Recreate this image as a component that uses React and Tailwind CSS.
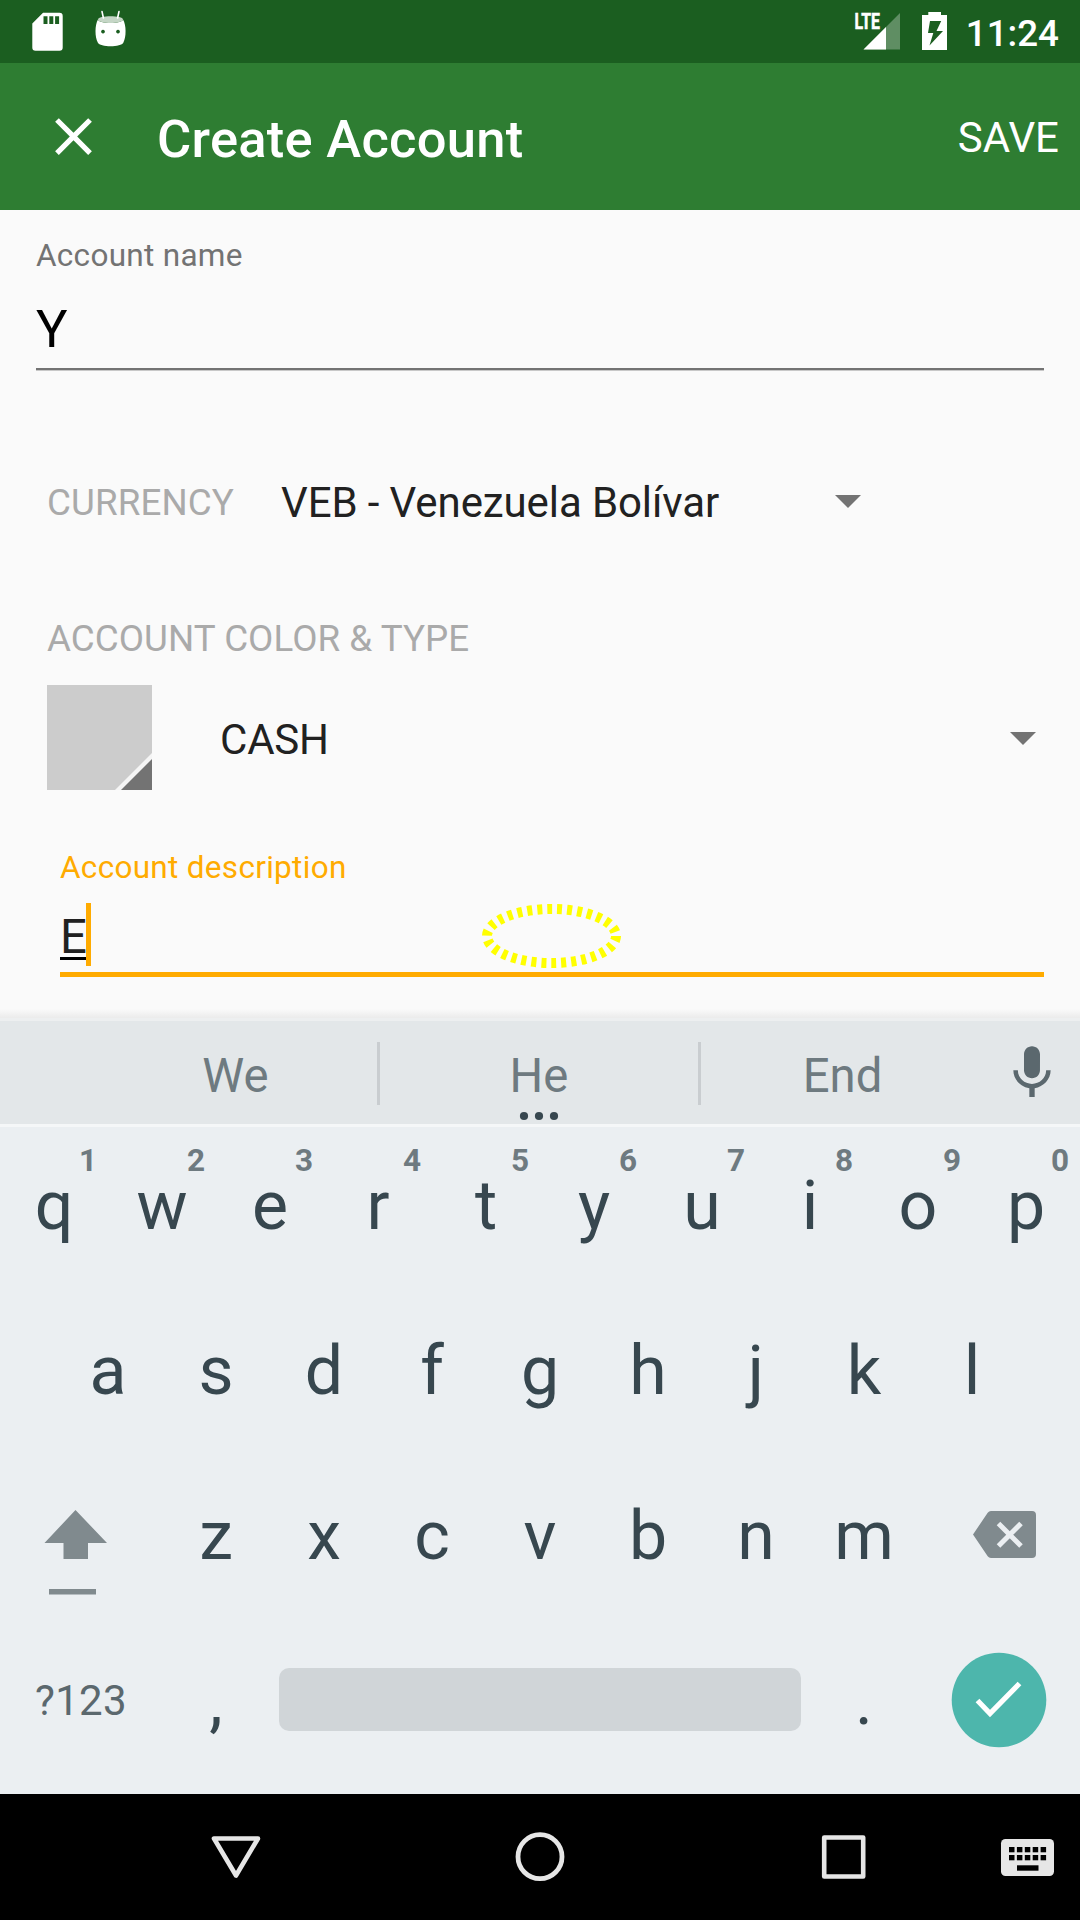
const ROW_ONE = ['q', 'w', 'e', 'r', 't', 'y', 'u', 'i', 'o', 'p'];
const ROW_TWO = ['a', 's', 'd', 'f', 'g', 'h', 'j', 'k', 'l'];
const ROW_THREE = ['z', 'x', 'c', 'v', 'b', 'n', 'm'];

function StatusBar() {
  return (
    <header className="flex h-[63px] shrink-0 bg-[#1b5e20] text-white">
      <svg className="h-[63px] w-[160px]" viewBox="0 0 160 63" fill="white">
        <path
          fillRule="evenodd"
          d="M43 12.7h16.5a3.2 3.2 0 0 1 3.2 3.2v31.600a3.200 3.200 0 0 1-3.200 3.200h-24a3.200 3.200 0 0 1-3.200-3.200V23.500zM43.500 16.300v7.800h4v-7.800zM49.300 16.300v7.800h4v-7.800zM55.100 16.300v7.800h4v-7.800z"
        />
        <path
          fillRule="evenodd"
          d="M98 19.500c0 4.600 25 4.600 25 0c3.400 5.500 3.400 17.700.3 23.200c-1.800 4.600-23.600 4.600-25.400 0c-3.200-5.500-3.200-17.700.1-23.200zM103 29.700a1.900 1.900 0 1 0 .01 0zM118 29.700a1.900 1.900 0 1 0 .01 0z"
        />
        <path d="M98 19.500c0-4.400 25-4.400 25 0c0 4.600-25 4.600-25 0z" fill="#c5d6c6" />
        <path d="M102 11.500l1.400 6.500M119 11.500l-1.400 6.500" stroke="white" strokeWidth="1.600" strokeLinecap="round" />
      </svg>
      <svg className="ml-auto h-[63px] w-[112px]" viewBox="848 0 112 63" fill="white">
        <text
          x="854.500"
          y="29.300"
          fontFamily="Roboto, sans-serif"
          fontWeight="700"
          fontSize="22.500"
          textLength="25.500"
          lengthAdjust="spacingAndGlyphs"
          stroke="white"
          strokeWidth="0.600"
        >
          LTE
        </text>
        <path d="M863.500 49.500L900 13v36.500z" opacity=".3" />
        <path d="M863.500 49.500L886 27v22.500z" />
        <path
          fillRule="evenodd"
          d="M928.300 12h12.700v3h6v35h-25V15h6.300zM930 21l-2 12h5.300l-3.800 12.500L943 31h-6.500l4.700-10z"
        />
      </svg>
      <span className="mr-[21px] w-[99px] pt-[2px] text-right text-[36.75px] leading-[64px] font-medium whitespace-nowrap">11:24</span>
    </header>
  );
}

function Toolbar() {
  return (
    <div className="flex h-[147px] shrink-0 items-center bg-[#2e7d32] pr-[21px] pl-[42px] text-white">
      <svg className="size-[63px]" viewBox="0 0 24 24" fill="currentColor">
        <path d="M19 6.410L17.590 5 12 10.590 6.410 5 5 6.410 10.590 12 5 17.590 6.410 19 12 13.410 17.590 19 19 17.590 13.410 12z" />
      </svg>
      <h1 className="ml-[52px] pt-[5px] text-[52.5px] font-medium tracking-[0.27px]">Create Account</h1>
      <button className="ml-auto pt-[1px] text-[42px]">SAVE</button>
    </div>
  );
}

function Caret() {
  return (
    <svg className="h-[13px] w-[26px]" viewBox="0 0 26 13">
      <path d="M0 0h26L13 13z" fill="#737373" />
    </svg>
  );
}

function AccountForm() {
  return (
    <main className="flex h-[808px] shrink-0 flex-col bg-[#fafafa] text-[#212121]">
      <label className="mt-[26px] ml-[36px] text-[31.5px] leading-[40px] tracking-[0.29px] text-[#737373]">Account name</label>
      <div className="mx-[36px] mt-[23px] h-[71px] border-b-2 border-[#737373] text-[52.5px] leading-[60px] text-black shadow-[0_1px_0_#c8c8c8]">Y</div>

      <div className="mt-[102px] ml-[47px] flex h-[61px] items-center">
        <span className="w-[234px] text-[36.75px] tracking-[0.1px] text-[#aaaaaa]">CURRENCY</span>
        <span className="w-[554px] text-[42px] tracking-[-0.1px]">VEB - Venezuela Bolívar</span>
        <span className="pb-[2px]">
          <Caret />
        </span>
      </div>

      <div className="mt-[80px] ml-[47px] text-[36.75px] leading-[51px] tracking-[0.05px] text-[#aaaaaa]">ACCOUNT COLOR &amp; TYPE</div>
      <div className="mt-[21px] ml-[47px] flex h-[105px] items-center">
        <svg className="size-[105px]" viewBox="0 0 105 105">
          <path d="M0 0h105v105H0z" fill="#cccccc" />
          <path d="M105 68v37H68z" fill="#f5f5f5" />
          <path d="M105 74v31H74z" fill="#737373" />
        </svg>
        <span className="ml-[68px] w-[790px] pt-[4px] text-[42px] tracking-[-0.2px]">CASH</span>
        <span className="pt-[2px]">
          <Caret />
        </span>
      </div>

      <label className="mt-[58px] ml-[60px] text-[31.5px] leading-[40px] tracking-[0.3px] text-[#ffab00]">Account description</label>
      <div className="relative mr-[36px] ml-[60px] flex h-[89px] items-start border-b-[5px] border-[#ffab00] pt-[15px]">
        <span className="h-[57px] w-[26px] border-b-[3px] border-black text-[47.25px] leading-[69px]">E</span>
        <span className="h-[63px] w-[5px] bg-[#ffab00]" />
        <svg className="absolute top-[13px] left-[420px] h-[70px] w-[144px]" viewBox="480 901 144 70">
          <ellipse
            cx="551.500"
            cy="936"
            rx="64.500"
            ry="27"
            fill="none"
            stroke="#ffff00"
            strokeWidth="10"
            strokeDasharray="5 5"
          />
        </svg>
      </div>
      <div className="mt-auto h-[9px] bg-linear-to-b from-[#fafafa] to-[#ebebeb]" />
    </main>
  );
}

function Suggestions() {
  return (
    <div className="flex h-[106px] shrink-0 items-center border-t-[3px] border-[#edeff0] bg-[#e3e7e9] text-[47.25px] text-[#6e7a80]">
      <span className="ml-[94px] w-[283px] pt-[7px] text-center tracking-[0.2px]">We</span>
      <span className="mt-[2px] h-[63px] w-[3px] bg-[#c9cdd0]" />
      <span className="relative flex h-full w-[318px] items-center justify-center pt-[7px]">
        He
        <svg className="absolute bottom-[3px] left-[139px] h-[10px] w-[40px]" viewBox="0 0 40 10" fill="#37474f">
          <circle cx="5" cy="5" r="4.100" />
          <circle cx="20" cy="5" r="4.100" />
          <circle cx="35" cy="5" r="4.100" />
        </svg>
      </span>
      <span className="mt-[2px] h-[63px] w-[3px] bg-[#c9cdd0]" />
      <span className="w-[283px] pt-[7px] text-center">End</span>
      <svg className="mt-[1px] ml-[16px] size-[64px]" viewBox="0 0 24 24" fill="#5b686e">
        <path d="M12 14c1.660 0 2.990-1.340 2.990-3L15 5c0-1.660-1.340-3-3-3S9 3.340 9 5v6c0 1.660 1.340 3 3 3zm5.300-3c0 3-2.540 5.100-5.300 5.100S6.700 14 6.700 11H5c0 3.410 2.720 6.230 6 6.720V21h2v-3.280c3.280-.480 6-3.300 6-6.720h-1.700z" />
      </svg>
    </div>
  );
}

function Key({ letter, hint }) {
  return (
    <span className="relative w-[108px] text-center text-[68px] leading-[165px]">
      {letter}
      {hint && (
        <span className="absolute top-[17px] left-[68px] w-[40px] text-center text-[31.5px] leading-[40px] font-bold text-[#6e7a80]">
          {hint}
        </span>
      )}
    </span>
  );
}

function Keyboard() {
  return (
    <section className="flex h-[670px] shrink-0 flex-col border-t-[3px] border-[#f5f7f8] bg-[#ebeff2] text-[#37474f]">
      <div className="-mt-[3px] flex h-[165px]">
        {ROW_ONE.map((letter, i) => (
          <Key key={letter} letter={letter} hint={String((i + 1) % 10)} />
        ))}
      </div>
      <div className="flex h-[165px] justify-center">
        {ROW_TWO.map((letter) => (
          <Key key={letter} letter={letter} />
        ))}
      </div>
      <div className="flex h-[165px]">
        <svg className="h-[165px] w-[162px]" viewBox="0 1454 162 165" fill="#808a8e">
          <path d="M75.500 1510L107 1543H88v16H63.500v-16H44.500z" />
          <path d="M49 1589h47v5.500H49z" />
        </svg>
        {ROW_THREE.map((letter) => (
          <Key key={letter} letter={letter} />
        ))}
        <svg className="h-[165px] w-[162px]" viewBox="918 1454 162 165">
          <path
            d="M991 1511h41a4 4 0 0 1 4 4v39a4 4 0 0 1-4 4h-41a4 4 0 0 1-3.300-1.700L973 1534.500l14.700-21.800A4 4 0 0 1 991 1511z"
            fill="#808a8e"
          />
          <path d="M998.500 1523.500l22.500 22.500M1021 1523.500L998.500 1546" stroke="#ebeff2" strokeWidth="5" />
        </svg>
      </div>
      <div className="flex h-[165px] items-center">
        <span className="w-[162px] pb-[2px] pl-[35px] text-[42px] leading-[50px] tracking-[0.3px] text-[#5b686e]">?123</span>
        <Key letter="," />
        <span className="mx-[9px] mb-[4px] h-[63px] w-[522px] rounded-[10px] bg-[#d0d5d8]" />
        <Key letter="." />
        <svg className="h-[165px] w-[162px]" viewBox="918 1619 162 165">
          <circle cx="999" cy="1700" r="47.300" fill="#4db6ac" />
          <path d="M977.500 1700.500L990 1713.500L1019.500 1683.500" fill="none" stroke="white" strokeWidth="5.200" />
        </svg>
      </div>
    </section>
  );
}

function NavBar() {
  return (
    <nav className="flex h-[126px] shrink-0 items-center bg-black">
      <svg className="ml-[206px] size-[60px]" viewBox="206 1827 60 60" fill="none" stroke="#e6e6e6" strokeWidth="4.600" strokeLinejoin="round">
        <path d="M214 1838.500h44L236 1875.500z" />
      </svg>
      <svg className="ml-[244px] size-[60px]" viewBox="510 1827 60 60" fill="none" stroke="#e6e6e6" strokeWidth="4.800">
        <circle cx="540" cy="1856.700" r="22" />
      </svg>
      <svg className="ml-[244px] size-[60px]" viewBox="814 1827 60 60" fill="none" stroke="#e6e6e6" strokeWidth="4.600" strokeLinejoin="round">
        <path d="M824.200 1837.500h39v39h-39z" />
      </svg>
      <svg className="ml-[124px] size-[60px]" viewBox="998 1827 60 60">
        <rect x="1001" y="1839" width="53" height="37" rx="4.500" fill="#e6e6e6" />
        {[0, 1, 2, 3, 4].map((col) => (
          <g key={col}>
            <rect x={1009 + col * 7.900} y="1847" width="5.500" height="5.300" />
            <rect x={1009 + col * 7.900} y="1855" width="5.500" height="5.300" />
          </g>
        ))}
        <rect x="1017" y="1865.300" width="21.500" height="5.400" />
      </svg>
    </nav>
  );
}

export default function App() {
  return (
    <div className="flex h-[1920px] w-[1080px] flex-col overflow-hidden bg-black font-['Roboto',sans-serif]">
      <StatusBar />
      <Toolbar />
      <AccountForm />
      <Suggestions />
      <Keyboard />
      <NavBar />
    </div>
  );
}
